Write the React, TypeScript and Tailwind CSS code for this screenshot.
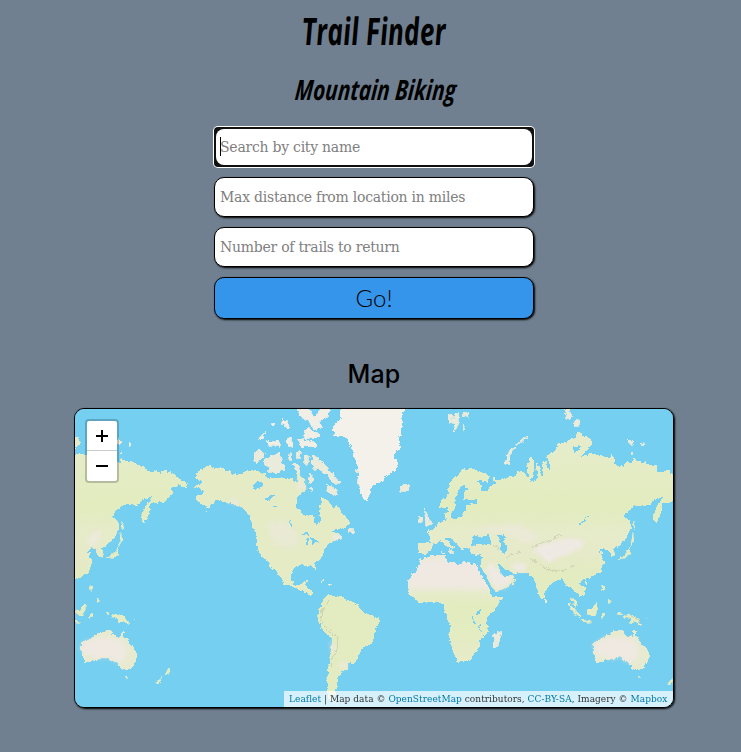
import React from "react";

const eurasia =
  "M440 507L441 500L447 496L450 483L457 475L463 469L472 468L477 471L485 473L489 477L489 482L482 482L477 480L481 486L481 491L487 491L489 486L495 484L494 477L497 480L503 479L510 477L515 476L518 471L525 473L528 478L527 467L530 457L534 460L534 475L530 482L533 483L537 478L536 462L540 468L543 479L542 463L545 461L548 469L551 470L547 455L555 452L557 445L565 442L575 438L578 431L582 436L590 437L592 443L585 452L580 457L592 453L600 456L608 457L612 454L615 463L618 467L627 463L632 463L633 458L640 462L645 461L648 465L657 466L658 471L668 471L673 474L675 470L682 471L689 477L700 484L697 489L692 485L688 486L682 488L685 493L675 502L665 503L662 503L662 510L659 518L655 524L653 515L657 507L664 497L658 498L652 502L649 505L635 505L629 510L624 517L630 520L631 528L627 537L617 547L613 548L615 556L611 557L609 550L604 548L599 551L599 553L603 552L602 556L604 563L600 573L590 578L583 579L580 583L585 588L585 595L580 597L575 592L571 587L567 587L562 578L555 580L545 590L544 597L541 599L538 593L536 583L533 578L527 573L513 573L503 568L498 565L503 576L511 575L516 579L508 587L495 592L491 587L485 575L480 567L482 558L481 555L475 555L470 553L470 549L465 548L463 552L458 545L450 538L445 538L449 543L455 547L451 550L447 545L440 541L432 545L430 551L425 555L418 553L419 543L430 543L430 537L426 532L433 529L440 523L447 519L445 513L449 512L452 519L460 518L465 510L467 505L477 503L477 500L463 500L463 493L467 488L463 485L457 492L455 503L453 512L450 514L447 507L443 508Z";

const africa =
  "M420 560L434 555L445 555L446 561L458 565L462 562L477 565L479 571L490 590L492 596L503 596L498 605L487 618L488 632L480 640L480 647L470 660L458 663L453 650L448 635L451 627L445 612L443 603L435 602L418 603L408 592L408 580L418 567Z";

const northAmerica =
  "M195 478L200 470L207 466L223 469L237 475L252 470L265 473L268 478L290 478L297 482L297 468L301 475L305 483L305 492L297 497L297 507L303 514L313 515L316 525L320 523L321 497L328 500L333 508L338 505L342 513L351 523L345 527L330 532L338 533L337 540L330 542L322 553L323 555L315 563L317 572L313 566L300 565L292 570L291 580L295 585L302 585L303 581L307 581L305 587L312 589L312 597L303 591L283 583L281 577L265 560L257 550L257 537L255 530L247 513L240 506L229 503L217 500L208 508L203 514L207 507L195 498L203 492L200 488L193 486L203 483Z";

const southAmerica =
  "M322 600L328 595L342 597L357 604L362 612L375 616L381 621L375 630L373 642L362 648L358 658L353 664L348 663L348 670L342 671L341 675L338 677L337 685L335 692L333 702L337 706L328 698L327 677L330 660L332 638L323 631L317 618L321 607Z";

const greenland =
  "M341 406L340 414L341 419L333 426L334 436L347 438L352 450L359 470L360 493L365 501L368 499L373 485L382 482L385 476L397 470L398 463L393 455L401 447L398 440L402 430L402 413L409 406Z";

const australia =
  "M593 647L593 643L604 638L612 632L618 630L623 630L625 635L632 638L634 629L638 638L644 646L649 653L648 661L643 669L634 670L628 663L620 658L610 659L599 663L596 663L594 653Z";

const arcticSnow =
  "M304 431L309 428L312 432L315 438L305 438ZM297 410L308 406L314 418L322 408L330 406L327 417L320 420L322 428L314 430L310 421L302 418ZM282 418L288 422L289 428L283 425ZM258 438L265 431L262 440ZM266 442L279 440L279 446L268 446ZM287 439L291 437L292 446L287 446ZM298 439L315 442L316 446L302 447ZM307 432L319 433L318 437L308 436ZM271 424L275 423L274 426Z";

const arcticLand =
  "M254 453L260 449L265 454L258 463L254 460ZM264 460L272 456L279 452L281 460L285 469L278 473L266 472L271 467L264 464ZM290 453L293 460L288 460ZM298 451L301 452L299 458L295 458ZM304 455L308 455L308 463L305 463ZM312 454L320 460L325 465L333 474L340 483L333 483L326 474L317 468L312 468ZM310 474L314 479L311 484L308 480ZM327 484L336 489L337 496L327 491ZM309 488L313 489L312 492ZM295 463L300 467L298 473L294 468Z";

const islands =
  "M400 486L408 484L411 488L406 492L401 491ZM424 508L427 517L432 524L426 526L425 516ZM419 517L423 517L421 523L418 522ZM360 470L357 472L355 469ZM358 479L361 482L360 487L357 483ZM332 536L338 534L341 538L335 541ZM348 529L354 530L354 533L348 532ZM321 580L323 581L321 583ZM328 583L332 584L328 585ZM502 630L500 639L496 647L493 647L494 635ZM545 599L547 601L545 603ZM506 461L508 453L516 445L528 435L527 438L515 446L510 455L509 463ZM508 454L510 465L505 463ZM564 409L569 409L571 414L572 419L567 418ZM575 421L580 420L579 426L574 426ZM627 440L634 441L631 445ZM640 443L645 444L641 446ZM632 452L634 454L631 454ZM448 416L452 415L453 422L450 424ZM455 413L459 414L458 425L454 432L455 424L452 423ZM463 412L469 412L468 416L464 416ZM463 425L465 429L462 429ZM441 552L444 552L443 554ZM448 549L454 552L449 552Z";

const pacific =
  "M631 545L633 533L634 541L629 549L631 554L626 558L618 559L624 555L629 550ZM634 521L635 530L633 526ZM612 550L615 552L614 557L612 555ZM585 582L588 583L586 585ZM603 585L605 587L603 591L602 589ZM608 599L610 599L610 602L608 602ZM571 597L574 599L577 605L575 607ZM568 603L575 609L581 616L580 618L575 614ZM587 611L593 608L598 602L597 610L595 616L588 614ZM601 613L605 614L602 618ZM582 620L592 622L585 622ZM618 612L621 613L619 615ZM623 615L630 614L638 619L642 625L635 621L631 624L630 619L624 617ZM646 618L647 619L646 619ZM638 676L641 676L640 679ZM680 668L683 670L681 673L677 675ZM675 676L673 681L670 685L667 684L672 679Z";

const lakes =
  "M253 485L259 481L264 484L259 488L254 489ZM265 498L271 495L276 495L270 500L266 501ZM271 508L280 505L275 508ZM289 519L293 526L293 528L290 524ZM301 535L307 531L310 536L305 535ZM307 538L309 538L308 546L306 543ZM311 537L315 540L320 540L313 545ZM471 546L473 537L477 535L481 539L485 536L488 534L490 539L493 543L485 545L478 544ZM498 536L503 534L507 537L504 541L508 550L504 554L501 552L501 544ZM588 515L585 521L579 525L585 518ZM573 447L580 447L576 452L573 450ZM476 611L480 609L480 614L476 615ZM472 615L474 620L476 624L473 622ZM479 623L481 630L480 632Z";

const narrowSeas =
  "M477 566L480 566L485 574L491 586L495 592L502 593L502 595L493 594L490 590L484 579ZM498 564L501 565L505 570L513 573L511 575L504 577L500 571Z";

function EastHemisphere() {
  return (
    <>
      <path d={eurasia} fill="url(#climate)" />
      <path d={pacific} fill="#e5ecc4" stroke="#e5ecc4" strokeWidth=".6" />
      <path d={australia} fill="#e8ead0" />
      <path d="M594 644L606 638L620 638L634 641L638 651L636 661L629 662L622 657L609 658L596 654Z" fill="#efe9e2" filter="url(#soft)" />
    </>
  );
}

function WorldMap() {
  return (
    <svg className="block h-full w-full" viewBox="75 409 598 298" shapeRendering="crispEdges" aria-hidden="true">
      <defs>
        <linearGradient id="climate" gradientUnits="userSpaceOnUse" x1="0" y1="440" x2="0" y2="600">
          <stop offset="0" stopColor="#e6eccb" />
          <stop offset="0.42" stopColor="#e2ecbe" />
          <stop offset="0.58" stopColor="#e6ebc9" />
          <stop offset="0.72" stopColor="#e6eac8" />
          <stop offset="0.85" stopColor="#e3ebc0" />
        </linearGradient>
        <linearGradient id="sahara" gradientUnits="userSpaceOnUse" x1="0" y1="555" x2="0" y2="663">
          <stop offset="0" stopColor="#e9ead2" />
          <stop offset="0.08" stopColor="#f0e9e3" />
          <stop offset="0.28" stopColor="#efe9e1" />
          <stop offset="0.36" stopColor="#e6ebc9" />
          <stop offset="0.5" stopColor="#e2ecbd" />
          <stop offset="1" stopColor="#e6ebc9" />
        </linearGradient>
        <filter id="coast" filterUnits="userSpaceOnUse" x="75" y="409" width="598" height="298">
          <feTurbulence type="fractalNoise" baseFrequency="0.23" numOctaves="3" seed="7" result="noise" />
          <feDisplacementMap in="SourceGraphic" in2="noise" scale="5" xChannelSelector="R" yChannelSelector="G" />
        </filter>
        <filter id="soft" x="-30%" y="-30%" width="160%" height="160%">
          <feGaussianBlur stdDeviation="2" />
        </filter>
      </defs>
      <rect x="75" y="409" width="598" height="298" fill="#75cff0" />
      <g filter="url(#coast)">
        <EastHemisphere />
        <g transform="translate(-512 0)">
          <EastHemisphere />
          <path d={islands} fill="#ebebdc" />
        </g>
        <path d={africa} fill="url(#sahara)" />
        <path d={northAmerica} fill="#e4ebc5" />
        <path d={southAmerica} fill="#e3ebc0" />
        <path d={arcticLand} fill="#ebebdc" stroke="#ebebdc" strokeWidth=".8" />
        <path d={arcticSnow} fill="#f1eee6" stroke="#f1eee6" strokeWidth=".8" />
        <path d={islands} fill="#ebebdc" stroke="#ebebdc" strokeWidth=".8" />
        <path d={greenland} fill="#f4f1eb" />
        <g fill="#efe9e3" filter="url(#soft)">
          <path d="M484 569L492 562L501 573L514 578L507 587L495 590Z" />
          <path d="M484 569L492 562L501 573L514 578L507 587L495 590Z" />
          <path d="M510 565L525 562L526 571L514 571Z" />
          <path d="M531 550L545 543L556 541L570 538L586 541L580 549L560 557L548 563L540 556Z" />
          <path d="M298 478L304 483L304 490L298 489Z" />
          <path d="M228 498L238 501L240 505L232 503Z" />
          <path d="M266 522L285 520L299 535L296 548L273 545Z" opacity=".5" />
          <path d="M338 663L348 661L346 669L338 668Z" opacity=".7" />
          <path d="M331 640L336 648L332 655Z" />
          <path d="M86 541L98 528L102 535L93 548Z" opacity=".7" />
          <path d="M464 533L492 525L520 524L540 536L528 546L508 535L490 532Z" opacity=".5" />
        </g>
        <g fill="none" stroke="#c6cbad" strokeWidth="1" opacity=".65">
          <path d="M329 599L322 610L321 621L327 629L338 638L337 648L332 658L331 667" />
          <path d="M532 547L541 543L552 540L561 535M531 558L540 565L552 571L564 570L575 565M493 544L500 549M506 557L520 552" />
          <path d="M627 617L635 618L641 623" />
        </g>
        <path d={lakes} fill="#75cff0" />
      </g>
      <path d={narrowSeas} fill="#75cff0" />
    </svg>
  );
}

function Field({ placeholder }: { placeholder: string }) {
  return (
    <input
      className="h-10 w-full rounded-[10px] border border-black bg-white px-[5px] font-['DejaVu_Serif',serif] text-[14px] tracking-[-0.25px] text-black shadow-[1px_1px_2px_#000] outline-none placeholder:text-[#808080]"
      placeholder={placeholder}
    />
  );
}

function Credit({ children }: { children: React.ReactNode }) {
  return <a className="text-[#0078a8]">{children}</a>;
}

export default function App() {
  return (
    <main className="flex h-[752px] w-[741px] flex-col items-center overflow-hidden bg-[#708090] pl-[7px] text-black">
      <h1 className="mt-[4px] flex h-[51px] w-[142px] items-center justify-center whitespace-nowrap font-['Open_Sans',sans-serif] text-[38px] font-bold italic leading-none">
        <span className="block scale-x-[.7] skew-x-[5deg]">Trail Finder</span>
      </h1>
      <h2 className="mt-[14px] flex h-[40px] w-[160px] items-center justify-center whitespace-nowrap pl-[4px] font-['Open_Sans',sans-serif] text-[28px] font-bold italic leading-none">
        <span className="block scale-x-[.74] skew-x-[-7deg]">Mountain Biking</span>
      </h2>

      <form className="mt-[18px] flex w-[320px] flex-col gap-[10px]" onSubmit={(e) => e.preventDefault()}>
        <div className="relative h-10 rounded-[4px] bg-[#101010] p-[2px] ring-1 ring-white">
          <input
            className="block h-full w-full rounded-[8px] bg-white px-1 font-['DejaVu_Serif',serif] text-[14px] tracking-[-0.25px] outline-none placeholder:text-[#808080]"
            placeholder="Search by city name"
          />
          <span className="absolute left-[6px] top-[10px] h-[19px] w-px bg-black" />
        </div>
        <Field placeholder="Max distance from location in miles" />
        <Field placeholder="Number of trails to return" />
        <button className="h-[42px] rounded-[10px] border border-black bg-[#3595eb] font-['Lato',sans-serif] text-[24px] font-light leading-none shadow-[1px_1px_2px_#000]">
          Go!
        </button>
      </form>

      <h2 className="mt-[39px] h-[32px] font-['Inter',sans-serif] text-[25px] font-medium leading-[32px] tracking-[0.2px]">Map</h2>

      <section className="relative mt-[18px] h-[300px] w-[600px] shrink-0 overflow-hidden rounded-[10px] border border-black shadow-[1px_1px_2px_#000]">
        <WorldMap />
        <div className="absolute left-[10px] top-[10px] flex w-[34px] flex-col rounded-[4px] border-2 border-black/20 bg-white bg-clip-padding text-black">
          <button className="flex h-[30px] items-center justify-center border-b border-[#ccc]" aria-label="Zoom in">
            <svg className="h-3 w-3" viewBox="0 0 12 12" shapeRendering="crispEdges">
              <path d="M0 5h12v2H0zM5 0h2v12H5z" />
            </svg>
          </button>
          <button className="flex h-[30px] items-center justify-center" aria-label="Zoom out">
            <svg className="h-3 w-3" viewBox="0 0 12 12" shapeRendering="crispEdges">
              <path d="M0 5h12v2H0z" />
            </svg>
          </button>
        </div>
        <div className="absolute bottom-0 right-0 flex h-[16px] w-[389px] items-center whitespace-pre bg-white/70 pb-px pl-[5px] font-['DejaVu_Serif_Condensed','DejaVu_Serif',serif] text-[10px] tracking-[0.04px] text-[#333]">
          <Credit>Leaflet</Credit> | Map data © <Credit>OpenStreetMap</Credit> contributors, <Credit>CC-BY-SA</Credit>, Imagery © <Credit>Mapbox</Credit>
        </div>
      </section>
    </main>
  );
}
